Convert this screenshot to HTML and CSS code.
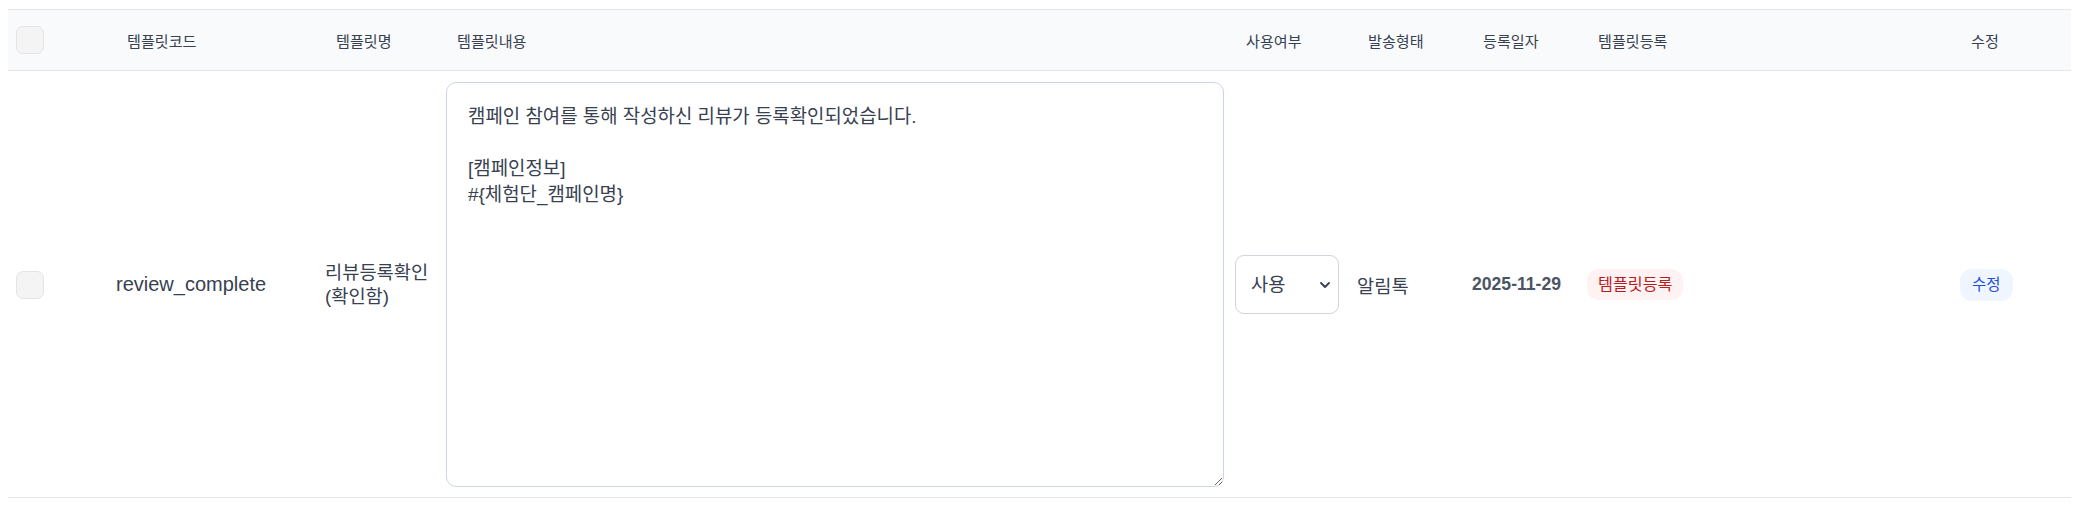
FILE: index.html
```html
<!DOCTYPE html>
<html lang="ko">
<head>
<meta charset="utf-8">
<title>템플릿 목록</title>
<link rel="stylesheet" href="styles.css">
</head>
<body>
<table class="tpl-table">
  <colgroup>
    <col class="c-check"><col class="c-code"><col class="c-name"><col class="c-content"><col class="c-use"><col class="c-type"><col class="c-date"><col class="c-reg"><col class="c-edit">
  </colgroup>
  <thead>
    <tr>
      <th class="cell-check"><input type="checkbox" class="chk" aria-label="전체 선택"></th>
      <th>템플릿코드</th>
      <th>템플릿명</th>
      <th>템플릿내용</th>
      <th>사용여부</th>
      <th>발송형태</th>
      <th>등록일자</th>
      <th>템플릿등록</th>
      <th>수정</th>
    </tr>
  </thead>
  <tbody>
    <tr>
      <td class="cell-check"><input type="checkbox" class="chk" aria-label="선택"></td>
      <td class="code">review_complete</td>
      <td class="name">리뷰등록확인 (확인함)</td>
      <td><textarea class="content">캠페인 참여를 통해 작성하신 리뷰가 등록확인되었습니다.

[캠페인정보]
#{체험단_캠페인명}</textarea></td>
      <td>
        <div class="select-wrap">
          <select class="use"><option>사용</option><option>미사용</option></select>
          <svg class="chev" width="10" height="6" viewBox="0 0 10 6"><path d="M1 1l4 4 4-4" fill="none" stroke="#374151" stroke-width="1.8" stroke-linecap="round" stroke-linejoin="round"/></svg>
        </div>
      </td>
      <td class="type">알림톡</td>
      <td class="date">2025-11-29</td>
      <td><span class="badge badge-red">템플릿등록</span></td>
      <td><span class="badge badge-blue">수정</span></td>
    </tr>
  </tbody>
</table>
</body>
</html>
```

FILE: styles.css
```css
body {
  margin: 9px 8px 0;
  background: #ffffff;
  font-family: "Liberation Sans", "Noto Sans CJK KR", sans-serif;
  color: #374151;
}

.tpl-table {
  width: 2063px;
  table-layout: fixed;
  border-collapse: separate;
  border-spacing: 0;
}

.c-check { width: 104px; }
.c-code { width: 209px; }
.c-name { width: 121px; }
.c-content { width: 789px; }
.c-use { width: 122px; }
.c-type { width: 115px; }
.c-date { width: 115px; }
.c-reg { width: 373px; }
.c-edit { width: 115px; }

.tpl-table th {
  height: 60px;
  padding: 0 0 0 15px;
  background: #f9fafb;
  border-top: 1px solid #e5e7eb;
  border-bottom: 1px solid #e5e7eb;
  text-align: left;
  font-weight: 400;
  font-size: 15.1px;
  color: #374151;
  vertical-align: middle;
}

.tpl-table td {
  padding: 11px 4px 10px;
  border-bottom: 1px solid #e5e7eb;
  vertical-align: middle;
  font-size: 18.7px;
  color: #374151;
}

.tpl-table .cell-check {
  padding-left: 8px;
}

.chk {
  appearance: none;
  display: block;
  margin: 0;
  width: 28px;
  height: 28px;
  border: 1px solid #e2e4e8;
  border-radius: 7px;
  background: #f4f4f5;
}

.tpl-table .code {
  font-size: 20px;
}

.name {
  line-height: 24px;
}

.content {
  display: block;
  box-sizing: border-box;
  width: 778px;
  height: 405px;
  margin: 0;
  padding: 21px 21px;
  border: 1px solid #c9d6e4;
  border-radius: 10px;
  font-family: "Liberation Sans", "Noto Sans CJK KR", sans-serif;
  font-size: 18.9px;
  line-height: 26px;
  color: #374151;
  background: #ffffff;
  outline: none;
}

.select-wrap {
  position: relative;
  display: inline-block;
  vertical-align: middle;
}

.use {
  appearance: none;
  display: block;
  box-sizing: border-box;
  width: 104px;
  height: 59px;
  margin: 0;
  padding: 0 0 0 15px;
  border: 1px solid #d1d5db;
  border-radius: 9px;
  background: #ffffff;
  font-family: "Liberation Sans", "Noto Sans CJK KR", sans-serif;
  font-size: 18.7px;
  color: #374151;
}

.chev {
  position: absolute;
  right: 9px;
  top: 27px;
  pointer-events: none;
}

.tpl-table .date {
  font-weight: 700;
  font-size: 17.6px;
  color: #4b5563;
}

.badge {
  display: inline-block;
  height: 31px;
  line-height: 31px;
  border-radius: 12px;
  white-space: nowrap;
}

.badge-red {
  padding: 0 11px;
  font-size: 16.2px;
  background: #fef2f2;
  color: #b91c1c;
}

.badge-blue {
  height: 32px;
  line-height: 32px;
  padding: 0 12px;
  font-size: 15.5px;
  background: #eff6ff;
  color: #1d4ed8;
}
```
